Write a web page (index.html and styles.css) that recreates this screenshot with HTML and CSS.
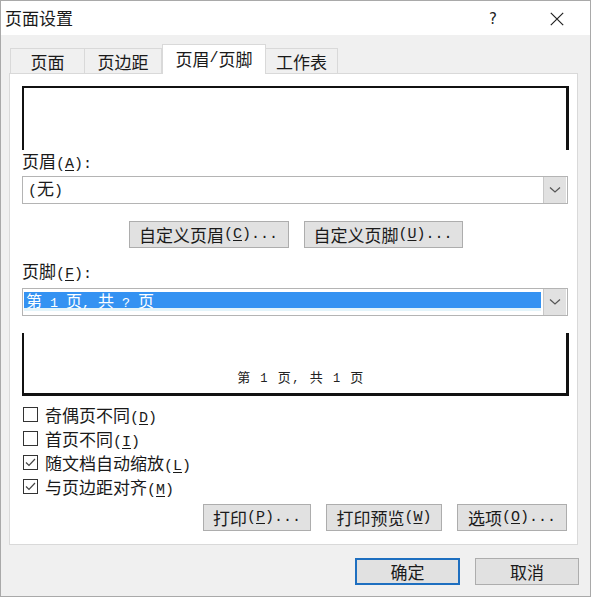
FILE: index.html
```html
<!DOCTYPE html>
<html lang="zh-CN">
<head>
<meta charset="utf-8">
<title>页面设置</title>
<link rel="stylesheet" href="styles.css">
</head>
<body>
<div class="dialog">
  <div class="titlebar">
    <span class="title">页面设置</span>
    <span class="tb-help">?</span>
    <span class="tb-close"><svg width="14" height="14" viewBox="0 0 14 14"><path d="M0.8 0.8 L13.2 13.2 M13.2 0.8 L0.8 13.2" stroke="#222" stroke-width="1.2" fill="none"/></svg></span>
  </div>
  <div class="body">
    <div class="tabs">
      <div class="tab t1">页面</div>
      <div class="tab t2">页边距</div>
      <div class="tab t3 active">页眉<span class="a">/</span>页脚</div>
      <div class="tab t4">工作表</div>
    </div>
    <div class="panel">
      <div class="preview preview-top"></div>
      <div class="label">页眉<span class="a">(<u>A</u>):</span></div>
      <div class="select">
        <div class="select-field"><span class="select-text"><span class="a">(</span>无<span class="a">)</span></span></div>
        <div class="select-btn"><svg width="12" height="8" viewBox="0 0 12 8"><path d="M1 1.5 L6 6 L11 1.5" stroke="#555" stroke-width="1.2" fill="none"/></svg></div>
      </div>
      <div class="btn-row centered">
        <div class="btn w-hdr">自定义页眉<span class="a">(<u>C</u>)...</span></div>
        <div class="btn w-ftr">自定义页脚<span class="a">(<u>U</u>)...</span></div>
      </div>
      <div class="label label-footer">页脚<span class="a">(<u>F</u>):</span></div>
      <div class="select select-footer">
        <div class="select-field"><span class="select-text highlighted">第<span class="m"> 1 </span>页<span class="m">, </span>共<span class="m"> ? </span>页</span></div>
        <div class="select-btn"><svg width="12" height="8" viewBox="0 0 12 8"><path d="M1 1.5 L6 6 L11 1.5" stroke="#555" stroke-width="1.2" fill="none"/></svg></div>
      </div>
      <div class="preview preview-bottom"><span class="preview-text">第<span class="s"> 1 </span>页<span class="s">, </span>共<span class="s"> 1 </span>页</span></div>
      <div class="checks">
        <div class="check-row"><span class="box"></span><span>奇偶页不同<span class="a">(<u>D</u>)</span></span></div>
        <div class="check-row"><span class="box"></span><span>首页不同<span class="a">(<u>I</u>)</span></span></div>
        <div class="check-row"><span class="box"><svg width="13" height="13" viewBox="0 0 13 13"><path d="M2 6.5 L5 9.5 L11 3" stroke="#444" stroke-width="1.2" fill="none"/></svg></span><span>随文档自动缩放<span class="a">(<u>L</u>)</span></span></div>
        <div class="check-row"><span class="box"><svg width="13" height="13" viewBox="0 0 13 13"><path d="M2 6.5 L5 9.5 L11 3" stroke="#444" stroke-width="1.2" fill="none"/></svg></span><span>与页边距对齐<span class="a">(<u>M</u>)</span></span></div>
      </div>
      <div class="btn-row right">
        <div class="btn w-print">打印<span class="a">(<u>P</u>)...</span></div>
        <div class="btn w-preview">打印预览<span class="a">(<u>W</u>)</span></div>
        <div class="btn w-opt">选项<span class="a">(<u>O</u>)...</span></div>
      </div>
    </div>
    <div class="dialog-buttons">
      <div class="btn dbtn default">确定</div>
      <div class="btn dbtn">取消</div>
    </div>
  </div>
</div>
</body>
</html>
```
FILE: styles.css
```css
* { box-sizing: border-box; }
html, body { margin: 0; padding: 0; }
body {
  width: 591px;
  height: 597px;
  font-family: "Noto Sans CJK SC", "Microsoft YaHei", sans-serif;
  font-size: 17px;
  color: #1a1a1a;
  background: #fff;
}
.a {
  font-family: "Liberation Mono", monospace;
  font-size: 15px;
}
.dialog {
  width: 591px;
  height: 597px;
  border: 1px solid #a9a9a9;
  background: #f0f0f0;
  display: flex;
  flex-direction: column;
}
.titlebar {
  height: 34px;
  background: #fff;
  display: flex;
  align-items: center;
  padding-left: 4px;
}
.title { flex: 1; font-size: 17px; line-height: 20px; margin-top: -1px; }
.tb-help {
  width: 20px;
  text-align: center;
  font-family: "DejaVu Sans", sans-serif;
  font-size: 15px;
  color: #222;
  margin-right: 47px;
  margin-top: 2px;
}
.tb-close { width: 14px; height: 14px; margin-right: 26px; display: flex; margin-top: 2px; }
.body {
  flex: 1;
  padding: 9px 12px 0 8px;
  display: flex;
  flex-direction: column;
}
.tabs {
  display: flex;
  align-items: flex-end;
  height: 29px;
  padding-left: 1px;
  position: relative;
  z-index: 1;
}
.tab {
  height: 25px;
  border: 1px solid #d9d9d9;
  border-bottom: none;
  background: #f0f0f0;
  display: flex;
  align-items: center;
  justify-content: center;
  font-size: 17px;
  padding-top: 1px;
}
.tab + .tab { border-left: none; }
.t1 { width: 75px; }
.t2 { width: 77px; }
.t3 { width: 104px; }
.t4 { width: 72px; }
.tab.active {
  height: 30px;
  margin-bottom: -1px;
  background: #fff;
  border-left: 1px solid #d9d9d9;
  padding-bottom: 3px;
}
.tab.active + .tab { border-left: none; }
.panel {
  border: 1px solid #d9d9d9;
  background: #fff;
  padding: 12px 9px 13px 12px;
  display: flex;
  flex-direction: column;
}
.preview { width: 547px; }
.preview-top {
  height: 64px;
  border-top: 2px solid #111;
  border-left: 2px solid #111;
  border-right: 3px solid #111;
}
.preview-bottom {
  height: 63px;
  margin-top: 17px;
  border-left: 2px solid #111;
  border-right: 3px solid #111;
  border-bottom: 3px solid #111;
  display: flex;
  align-items: flex-end;
  justify-content: center;
  padding-bottom: 6px;
}
.preview-text {
  font-size: 13px;
  line-height: 16px;
  color: #222;
  letter-spacing: 1.5px;
  margin-left: 12px;
}
.s {
  font-family: "Liberation Mono", monospace;
  font-size: 12px;
  white-space: pre;
}
.label {
  height: 22px;
  line-height: 22px;
}
.label-footer { margin-top: 12px; }
.select {
  width: 546px;
  height: 28px;
  margin-top: 4px;
  border: 1px solid #b4b4b4;
  display: flex;
  background: #fff;
}
.select-footer { margin-top: 6px; }
.select-field {
  flex: 1;
  display: flex;
  align-items: center;
  padding-left: 5px;
}
.select-text { line-height: 20px; }
.select-footer .select-field {
  padding: 3px 2px 4px 1px;
  align-items: stretch;
}
.highlighted {
  flex: 1;
  background: #3492f2;
  color: #fff;
  font-size: 16px;
  line-height: 17px;
  padding-left: 2px;
  border-bottom: 3px solid #e3f4fa;
}
.m {
  font-family: "Liberation Mono", monospace;
  font-size: 13.33px;
  white-space: pre;
}
.select-btn {
  width: 23px;
  margin: 0 1px 0 0;
  background: #e1e1e1;
  border-left: 1px solid #c8c8c8;
  display: flex;
  align-items: center;
  justify-content: center;
}
.btn-row {
  display: flex;
  gap: 15px;
  height: 27px;
}
.btn-row.centered { justify-content: center; margin-top: 17px; padding-left: 1px; }
.btn-row.right { justify-content: flex-end; margin-top: 6px; padding-right: 1px; }
.btn {
  height: 27px;
  background: #e1e1e1;
  border: 1px solid #adadad;
  display: flex;
  align-items: center;
  justify-content: center;
  line-height: 20px;
  color: #1a1a1a;
}
.w-hdr { width: 160px; }
.w-ftr { width: 159px; }
.w-print { width: 108px; }
.w-preview { width: 116px; }
.w-opt { width: 110px; }
.checks {
  margin-top: 6px;
  display: flex;
  flex-direction: column;
}
.check-row {
  height: 24px;
  display: flex;
  align-items: center;
  gap: 7px;
  padding-left: 1px;
}
.box {
  width: 15px;
  height: 15px;
  border: 1px solid #333;
  background: #fff;
  display: flex;
  align-items: center;
  justify-content: center;
}
.dialog-buttons {
  display: flex;
  justify-content: flex-end;
  gap: 15px;
  margin-top: 13px;
  margin-right: -1px;
}
.dbtn { width: 104px; }
.dbtn.default {
  width: 105px;
  border: 2px solid #1e6fc0;
}
u { text-decoration-thickness: 1px; text-underline-offset: 2px; }
```
